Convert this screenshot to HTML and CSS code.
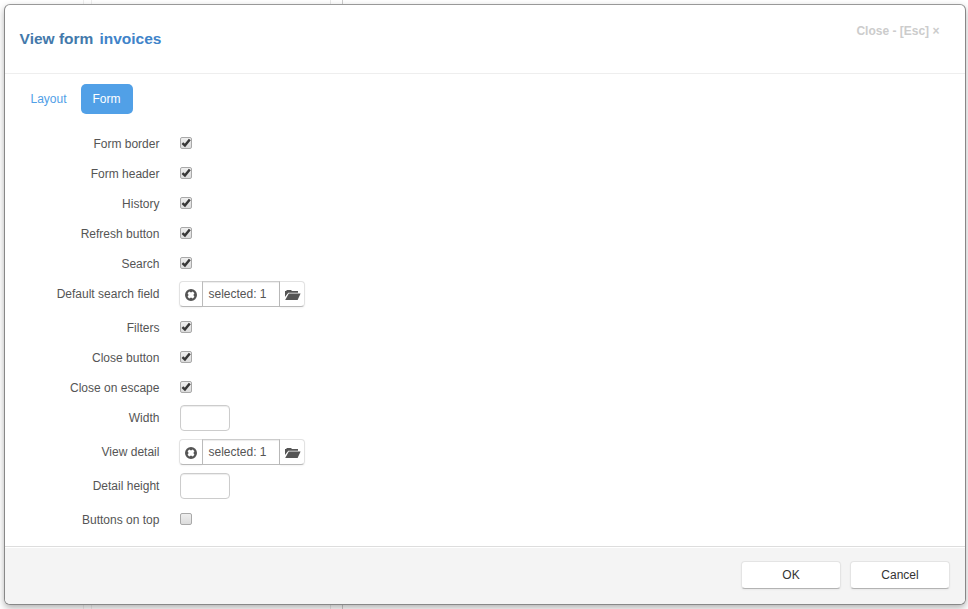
FILE: index.html
```
<!DOCTYPE html>
<html lang="en">
<head>
<meta charset="utf-8">
<title>View form invoices</title>
<link rel="stylesheet" href="styles.css">
</head>
<body>
<svg class="defs" width="0" height="0">
  <symbol id="clear" viewBox="0 0 12 12"><path fill-rule="evenodd" d="M6 0a6 6 0 1 0 0 12A6 6 0 0 0 6 0zM4.2 2.6 6 3.6 7.8 2.6 9.4 4.2 8.4 6l1 1.8-1.6 1.6L6 8.4 4.2 9.4 2.6 7.8 3.6 6l-1-1.8z"/></symbol>
  <symbol id="folder" viewBox="0 0 16 12"><path d="M0 8V2h1.5V1H6l1 1h6v1.8H3.3L1.9 5.5zM3.8 4.6H15.6L12.6 11H.2z"/></symbol>
  <symbol id="check" viewBox="0 0 12 12"><path d="M2.4 6.2 4.9 8.5 9.8 2.5" fill="none" stroke="#383838" stroke-width="2.5"/></symbol>
</svg>
<div class="modal">
  <header class="head">
    <h1><span class="kind">View form</span><span class="name">invoices</span></h1>
    <a class="close">Close - [Esc] ×</a>
  </header>
  <main class="body">
    <nav class="tabs"><a class="tab">Layout</a><a class="tab active">Form</a></nav>
    <div class="row"><label>Form border</label><span class="box"><svg><use href="#check"/></svg></span></div>
    <div class="row"><label>Form header</label><span class="box"><svg><use href="#check"/></svg></span></div>
    <div class="row"><label>History</label><span class="box"><svg><use href="#check"/></svg></span></div>
    <div class="row"><label>Refresh button</label><span class="box"><svg><use href="#check"/></svg></span></div>
    <div class="row"><label>Search</label><span class="box"><svg><use href="#check"/></svg></span></div>
    <div class="row tall"><label>Default search field</label><div class="picker"><span class="clear"><svg><use href="#clear"/></svg></span><span class="value">selected: 1</span><span class="open"><svg><use href="#folder"/></svg></span></div></div>
    <div class="row"><label>Filters</label><span class="box"><svg><use href="#check"/></svg></span></div>
    <div class="row"><label>Close button</label><span class="box"><svg><use href="#check"/></svg></span></div>
    <div class="row"><label>Close on escape</label><span class="box"><svg><use href="#check"/></svg></span></div>
    <div class="row tall"><label>Width</label><input class="field" type="text"></div>
    <div class="row tall"><label>View detail</label><div class="picker"><span class="clear"><svg><use href="#clear"/></svg></span><span class="value">selected: 1</span><span class="open"><svg><use href="#folder"/></svg></span></div></div>
    <div class="row tall"><label>Detail height</label><input class="field" type="text"></div>
    <div class="row"><label>Buttons on top</label><span class="box"></span></div>
  </main>
  <footer class="foot"><button>OK</button><button>Cancel</button></footer>
</div>
</body>
</html>
```
FILE: styles.css
```
* { box-sizing: border-box; }
body {
  margin: 0;
  height: 609px;
  padding: 4px 2px 4px 4px;
  overflow: hidden;
  font: 12px/20px "Liberation Sans", Arial, sans-serif;
  color: #555;
  background:
    linear-gradient(#eee, #eee) 83px 0 / 1px 100% no-repeat,
    linear-gradient(#eee, #eee) 91px 0 / 1px 100% no-repeat,
    linear-gradient(#e8e8e8, #e8e8e8) 330px 0 / 1px 100% no-repeat,
    linear-gradient(#ccc, #ccc) 342px 0 / 1px 100% no-repeat,
    #fff;
}
.defs { position: absolute; }
.modal {
  display: flex;
  flex-direction: column;
  height: 601px;
  border: 1px solid #888;
  border-top-color: #999;
  border-radius: 6px;
  background: #fff;
  box-shadow: 0 3px 7px rgba(0, 0, 0, .3);
  overflow: hidden;
}
.head {
  display: flex;
  justify-content: space-between;
  height: 69px;
  padding: 16px 25.6px 0 14.6px;
  border-bottom: 1px solid #eee;
}
h1 {
  display: flex;
  gap: 6px;
  margin: 8px 0 0;
  font-size: 15.5px;
  line-height: 20px;
}
.kind { color: #4379ab; }
.name { color: #4083c9; }
.close { font-weight: bold; color: #ccc; }
.body { flex: 1; padding: 10px 0 0 15px; }
.tabs { display: flex; gap: 2px; height: 45px; }
.tab { height: 30px; padding: 5px 12.5px 5px 10.5px; border-radius: 5px; color: #51a0e7; }
.tab.active { width: 52px; padding-left: 11.5px; background: #51a0e7; color: #fff; }
.row { display: flex; height: 30px; }
.row.tall { height: 34px; }
.row label { width: 140px; padding: 5px .6px 0 0; text-align: right; }
.box {
  width: 12px;
  height: 12px;
  margin: 8px 0 0 20px;
  border: 1px solid #a9a9a9;
  border-radius: 2px;
  background: linear-gradient(#eee, #dcdcdc);
}
.box svg { display: block; width: 12px; height: 12px; margin: -1px; overflow: visible; }
.field {
  width: 50px;
  height: 26px;
  margin: 2px 0 0 20px;
  border: 1px solid #ccc;
  border-radius: 4px;
  background: #fff;
  box-shadow: inset 0 1px 1px rgba(0, 0, 0, .075);
}
.picker {
  display: flex;
  width: 126px;
  height: 26px;
  margin: 2px 0 0 19px;
}
.clear, .open {
  display: flex;
  border: 1px solid #e2e2e2;
  border-bottom-color: #b8b8b8;
  box-shadow: 0 1px 2px rgba(0, 0, 0, .05);
}
.clear { width: 23px; padding: 7px 0 0 5px; border-right: 0; border-radius: 4px 0 0 4px; }
.open { width: 25px; padding: 7px 0 0 5px; border-left: 0; border-radius: 0 4px 4px 0; }
.clear svg { width: 12px; height: 12px; fill: #555; }
.open svg { width: 16px; height: 12px; fill: #555; }
.value {
  width: 78px;
  padding: 2px 0 0 5.5px;
  border: 1px solid #bbb;
  border-top-color: #ccc;
  box-shadow: inset 0 1px 1px rgba(0, 0, 0, .075);
}
.foot {
  display: flex;
  justify-content: flex-end;
  gap: 9px;
  height: 58px;
  padding: 14px 15px 0;
  border-top: 1px solid #ddd;
  background: #f4f4f4;
  box-shadow: inset 0 1px 0 #fff;
}
button {
  width: 100px;
  height: 28px;
  padding: 0;
  border: 1px solid #e4e4e4;
  border-bottom-color: #b3b3b3;
  border-radius: 4px;
  background: #fff;
  box-shadow: 0 1px 2px rgba(0, 0, 0, .05);
  font: inherit;
  color: #333;
}
```
